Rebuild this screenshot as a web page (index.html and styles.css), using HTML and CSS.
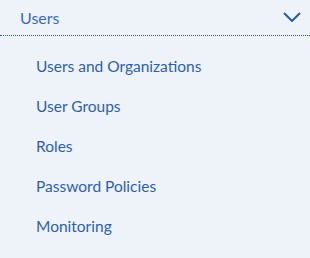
FILE: index.html
```html
<!DOCTYPE html>
<html>
<head>
<meta charset="utf-8">
<link rel="stylesheet" href="styles.css">
</head>
<body>
<nav class="menu">
  <div class="menu-header">
    <span class="menu-title">Users</span>
    <svg class="chevron" width="18" height="10" viewBox="0 0 18 10"><path d="M1 1 L9 9 L17 1" fill="none" stroke="#2c5aa0" stroke-width="2"/></svg>
  </div>
  <ul class="menu-list">
    <li class="menu-item">Users and Organizations</li>
    <li class="menu-item">User Groups</li>
    <li class="menu-item">Roles</li>
    <li class="menu-item">Password Policies</li>
    <li class="menu-item">Monitoring</li>
  </ul>
</nav>
</body>
</html>
```
FILE: styles.css
```css
html, body {
  margin: 0;
  padding: 0;
  background: #eef3fa;
}
body {
  width: 310px;
  height: 258px;
  overflow: hidden;
  font-family: Lato, "Liberation Sans", sans-serif;
}
.menu-header {
  height: 35px;
  display: flex;
  align-items: center;
  justify-content: space-between;
  padding: 0 9px 0 20px;
  border-bottom: 1px dotted #2c5aa0;
}
.menu-title {
  font-size: 16px;
  color: #3d6bb3;
}
.chevron {
  display: block;
  margin-top: -2px;
}
.menu-list {
  list-style: none;
  margin: 0;
  padding: 10px 0 0 36px;
}
.menu-item {
  height: 40px;
  line-height: 40px;
  font-size: 15.5px;
  color: #2f5fa8;
}
```
